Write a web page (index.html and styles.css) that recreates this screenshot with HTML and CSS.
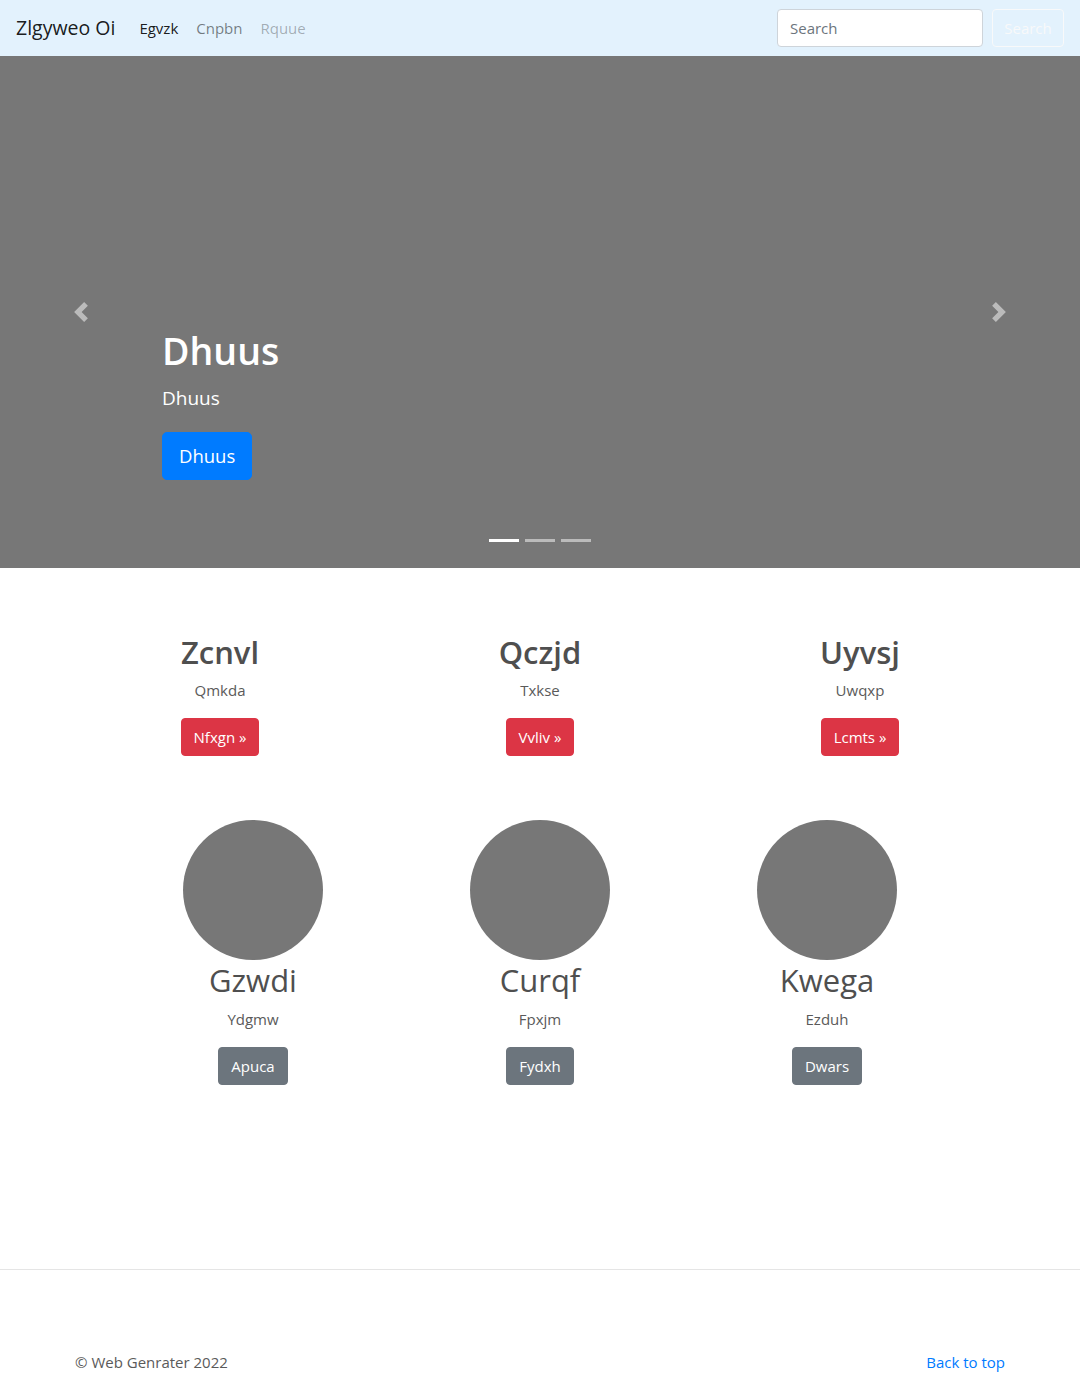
FILE: index.html
```html
<!DOCTYPE html>
<html lang="en">
<head>
<meta charset="utf-8">
<title>Zlgyweo Oi</title>
<link rel="stylesheet" href="styles.css">
</head>
<body>
<header class="navbar">
  <a class="brand" href="#">Zlgyweo Oi</a>
  <nav class="nav">
    <a class="nav-link active" href="#">Egvzk</a>
    <a class="nav-link" href="#">Cnpbn</a>
    <a class="nav-link disabled" href="#">Rquue</a>
  </nav>
  <form class="search">
    <input class="search-input" type="text" placeholder="Search">
    <button class="search-btn" type="button">Search</button>
  </form>
</header>

<section class="carousel">
  <a class="ctrl ctrl-prev" href="#">
    <svg width="20" height="20" viewBox="0 0 8 8"><path fill="#fff" d="M5.25 0l-4 4 4 4 1.5-1.5L4.25 4l2.5-2.5L5.25 0z"/></svg>
  </a>
  <div class="caption">
    <h1 class="cap-title">Dhuus</h1>
    <p class="cap-text">Dhuus</p>
    <p class="cap-btn-wrap"><a class="btn btn-lg btn-primary" href="#">Dhuus</a></p>
  </div>
  <a class="ctrl ctrl-next" href="#">
    <svg width="20" height="20" viewBox="0 0 8 8"><path fill="#fff" d="M2.75 0l-1.5 1.5L3.75 4l-2.5 2.5L2.75 8l4-4-4-4z"/></svg>
  </a>
  <ol class="indicators">
    <li class="ind active"></li>
    <li class="ind"></li>
    <li class="ind"></li>
  </ol>
</section>

<main class="marketing">
  <div class="row row-top">
    <div class="col">
      <h2 class="col-title">Zcnvl</h2>
      <p class="col-text">Qmkda</p>
      <p class="col-btn"><a class="btn btn-danger" href="#">Nfxgn &raquo;</a></p>
    </div>
    <div class="col">
      <h2 class="col-title">Qczjd</h2>
      <p class="col-text">Txkse</p>
      <p class="col-btn"><a class="btn btn-danger" href="#">Vvliv &raquo;</a></p>
    </div>
    <div class="col">
      <h2 class="col-title">Uyvsj</h2>
      <p class="col-text">Uwqxp</p>
      <p class="col-btn"><a class="btn btn-danger" href="#">Lcmts &raquo;</a></p>
    </div>
  </div>

  <div class="row row-circles">
    <div class="col">
      <div class="circle"></div>
      <h2 class="circle-title">Gzwdi</h2>
      <p class="col-text">Ydgmw</p>
      <p class="col-btn"><a class="btn btn-secondary" href="#">Apuca</a></p>
    </div>
    <div class="col">
      <div class="circle"></div>
      <h2 class="circle-title">Curqf</h2>
      <p class="col-text">Fpxjm</p>
      <p class="col-btn"><a class="btn btn-secondary" href="#">Fydxh</a></p>
    </div>
    <div class="col">
      <div class="circle"></div>
      <h2 class="circle-title">Kwega</h2>
      <p class="col-text">Ezduh</p>
      <p class="col-btn"><a class="btn btn-secondary" href="#">Dwars</a></p>
    </div>
  </div>
</main>

<hr class="divider">

<footer class="footer">
  <p class="copy">&copy; Web Genrater 2022</p>
  <a class="top-link" href="#">Back to top</a>
</footer>
</body>
</html>
```

FILE: styles.css
```css
* { box-sizing: border-box; }

html, body {
  margin: 0;
  padding: 0;
}

body {
  font-family: "Open Sans", "Noto Sans", "Liberation Sans", sans-serif;
  font-size: 16px;
  line-height: 1.5;
  color: #5a5a5a;
  background: #fff;
}

a { text-decoration: none; }

/* Navbar */
.navbar {
  height: 56px;
  background: #e3f2fd;
  display: flex;
  align-items: center;
  padding: 0 16px;
}

.brand {
  font-size: 19.5px;
  color: rgba(0, 0, 0, 0.9);
  margin-right: 15px;
  line-height: 30px;
}

.nav {
  display: flex;
  flex: 1;
}

.nav-link {
  padding: 8px 9px;
  font-size: 15px;
  color: rgba(0, 0, 0, 0.5);
}

.nav-link.active { color: rgba(0, 0, 0, 0.9); }
.nav-link.disabled { color: rgba(0, 0, 0, 0.3); }

.search {
  display: flex;
  align-items: center;
  gap: 9px;
}

.search-input {
  width: 206px;
  height: 38px;
  padding: 6px 12px;
  font-family: inherit;
  font-size: 15px;
  color: #495057;
  border: 1px solid #ced4da;
  border-radius: 4px;
  background: #fff;
}

.search-input::placeholder { color: #6c757d; }

.search-btn {
  height: 38px;
  width: 72px;
  padding: 0;
  font-family: inherit;
  font-size: 15px;
  color: #f8f9fa;
  background: transparent;
  border: 1px solid #f8f9fa;
  border-radius: 4px;
}

/* Carousel */
.carousel {
  position: relative;
  height: 512px;
  background: #777;
  margin-bottom: 64px;
}

.ctrl {
  position: absolute;
  top: 0;
  bottom: 0;
  width: 162px;
  display: flex;
  align-items: center;
  justify-content: center;
  opacity: 0.5;
}

.ctrl svg { display: block; }
.ctrl-prev { left: 0; }
.ctrl-next { right: 0; }

.caption {
  position: absolute;
  left: 162px;
  right: 162px;
  bottom: 48px;
  padding: 20px 0;
  color: #fff;
  text-align: left;
}

.cap-title {
  margin: 0 0 8px;
  font-size: 37.5px;
  font-weight: 600;
  line-height: 50px;
}

.cap-text {
  margin: 0 0 20px;
  font-size: 19px;
  line-height: 28px;
}

.cap-btn-wrap { margin: 0 0 20px; }

.indicators {
  position: absolute;
  bottom: 16px;
  left: 0;
  right: 0;
  margin: 0;
  padding: 0;
  list-style: none;
  display: flex;
  justify-content: center;
  gap: 6px;
}

.ind {
  width: 30px;
  height: 3px;
  background: rgba(255, 255, 255, 0.5);
  margin-top: 10px;
  margin-bottom: 10px;
}

.ind.active { background: #fff; }

/* Buttons */
.btn {
  display: inline-block;
  height: 38px;
  line-height: 36px;
  padding: 0 12px;
  font-size: 15px;
  border: 1px solid transparent;
  border-radius: 4px;
  color: #fff;
}

.btn-lg {
  height: 48px;
  line-height: 46px;
  padding: 0 16px;
  font-size: 18.5px;
  border-radius: 5px;
}

.btn-primary { background: #007bff; border-color: #007bff; }
.btn-danger { background: #dc3545; border-color: #dc3545; }
.btn-secondary { background: #6c757d; border-color: #6c757d; }

/* Marketing */
.marketing {
  display: flex;
  flex-direction: column;
  align-items: center;
}

.row {
  display: flex;
}

.row-top {
  width: 960px;
  margin-bottom: 48px;
}

.row-circles {
  width: 861px;
}

.col {
  flex: 1;
  display: flex;
  flex-direction: column;
  align-items: center;
  text-align: center;
}

.col-title {
  margin: 1px 0 7px;
  font-size: 31px;
  font-weight: 600;
  line-height: 38px;
  color: #4f4f4f;
}

.circle-title {
  margin: 1px 0 8px;
  font-size: 31px;
  font-weight: 400;
  line-height: 38px;
  color: #4f4f4f;
}

.col-text {
  margin: 0 0 16px;
  font-size: 15px;
  line-height: 24px;
}

.col-btn { margin: 0 0 16px; }

.circle {
  width: 140px;
  height: 140px;
  border-radius: 50%;
  background: #777;
}

/* Footer */
.divider {
  margin: 168px 0 0;
  border: 0;
  border-top: 1px solid #e5e5e5;
}

.footer {
  width: 930px;
  margin: 0 auto;
  padding-top: 81px;
  display: flex;
  justify-content: space-between;
  align-items: center;
  font-size: 15px;
}

.copy { margin: 0; }
.top-link { color: #007bff; }
```
